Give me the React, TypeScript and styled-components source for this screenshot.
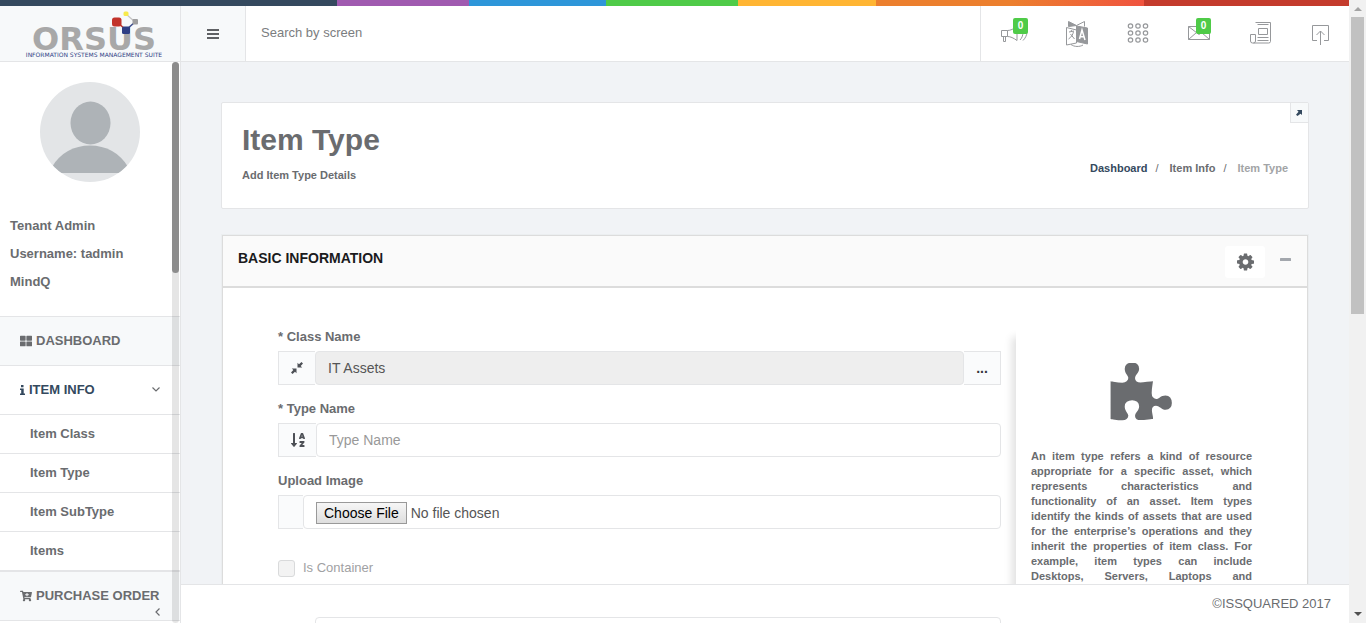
import React from 'react';
import styled, { createGlobalStyle } from 'styled-components';
import { FaThLarge, FaCartPlus, FaSortAlphaDown } from 'react-icons/fa';

const GlobalStyle = createGlobalStyle`
  *, *::before, *::after { box-sizing: border-box; }
  body {
    margin: 0;
    background: #f1f3f6;
    color: #6a6c6f;
    font: 13px/18px "Liberation Sans", Arial, sans-serif;
  }
  button, input { font: inherit; color: inherit; }
  a { color: inherit; text-decoration: none; }
  svg { display: block; flex: none; }
`;

const Shell = styled.div`
  display: flex;
  height: 100vh;
  overflow: hidden;
`;

const Page = styled.div`
  flex: 1;
  min-width: 0;
  display: flex;
  flex-direction: column;
`;

const Rainbow = styled.div`
  flex: none;
  height: 6px;
  background: linear-gradient(to right, #34495e 25%, #a05ab0 25%, #a05ab0 34.8%, #2e96d9 34.8%, #2e96d9 44.9%,
    #4fcb48 44.9%, #4fcb48 54.7%, #ffb533 54.7%, #ffb533 64.9%, #ec7f2e 64.9%, #ec7f2e 75%, #f0533f 84.8%, #c43b2c 84.8%);
`;

const Header = styled.header`
  flex: none;
  display: flex;
  height: 56px;
  background: #fff;
  border-bottom: 1px solid #e4e5e7;
`;

const LogoLink = styled.a`
  flex: none;
  width: 181px;
  background: #f7f9fa;
  border-right: 1px solid #e4e5e7;
`;

const MenuButton = styled.button`
  flex: none;
  width: 65px;
  display: flex;
  align-items: center;
  justify-content: center;
  background: #f7f9fa;
  border: 0;
  border-right: 1px solid #e4e5e7;
`;

const Search = styled.input`
  flex: 1;
  min-width: 0;
  padding: 0 15px 1px;
  border: 0;
  background: #fff;
  &::placeholder { color: #7b7d80; opacity: 1; }
`;

const Tools = styled.nav`
  flex: none;
  display: flex;
  padding-left: 2px;
  border-left: 1px solid #e4e5e7;
`;

const ToolButton = styled.button`
  position: relative;
  width: 61px;
  display: flex;
  align-items: center;
  justify-content: center;
  padding: 0 0 2px 4px;
  border: 0;
  background: none;
  color: #96989b;
`;

const Badge = styled.span`
  position: absolute;
  top: 12px;
  left: 30px;
  width: 15px;
  border-radius: 2px;
  background: #4fcb48;
  color: #fff;
  font-size: 10px;
  font-weight: bold;
  line-height: 16px;
  text-align: center;
`;

const Columns = styled.div`
  flex: 1;
  min-height: 0;
  display: flex;
`;

const Sidebar = styled.aside`
  position: relative;
  flex: none;
  width: 181px;
  overflow: hidden;
  background: #fff;
  border-right: 1px solid #e4e5e7;
  font-weight: bold;
`;

const SideTrack = styled.div`
  position: absolute;
  top: 0;
  right: 1px;
  bottom: 0;
  width: 7px;
  border-radius: 4px;
  background: rgba(0, 0, 0, 0.1);
`;

const SideThumb = styled.div`
  height: 211px;
  border-radius: 4px;
  background: #8c8c8c;
`;

const Profile = styled.div`
  padding: 20px 10px;
  border-bottom: 1px solid #e4e5e7;
`;

const Avatar = styled.div`
  width: 100px;
  height: 100px;
  margin: 0 auto 30px 30px;
  border-radius: 50%;
  overflow: hidden;
`;

const ProfileLine = styled.p`
  margin: 0;
  line-height: 28px;
`;

const Menu = styled.ul`
  margin: 0;
  padding: 0;
  list-style: none;
`;

const MenuLink = styled.a<{ $open?: boolean }>`
  display: flex;
  flex-wrap: wrap;
  align-items: center;
  align-content: flex-start;
  column-gap: 4px;
  height: 49px;
  padding: 15px 20px 0;
  background: ${(p) => (p.$open ? '#fff' : '#f7f9fa')};
  color: ${(p) => (p.$open ? '#34495e' : '#6a6c6f')};
  border-bottom: 1px solid #e4e5e7;
`;

const Chevron = styled.svg`
  margin-left: auto;
  fill: none;
  stroke: #6a6c6f;
  stroke-width: 1.2;
`;

const SubLink = styled.a`
  display: block;
  padding: 10px 30px;
  border-bottom: 1px solid #e4e5e7;
`;

const SubMenu = styled(Menu)`
  border-bottom: 1px solid #e4e5e7;
`;

const Main = styled.main`
  position: relative;
  flex: 1;
  min-width: 0;
  overflow: hidden;
  padding: 40px 40px 0;
`;

const TitleCard = styled.section`
  position: relative;
  display: flex;
  justify-content: space-between;
  margin-bottom: 26px;
  padding: 20px 20px 25px;
  background: #fff;
  border: 1px solid #e4e5e7;
  border-radius: 2px;
  font-size: 11px;
  font-weight: bold;
  line-height: 16px;
`;

const Title = styled.h1`
  margin: 0 0 10px;
  font-size: 30px;
  line-height: 34px;
`;

const Subtitle = styled.p`
  margin: 0;
`;

const Crumbs = styled.ol`
  display: flex;
  margin: 0;
  padding: 37px 0 0;
  list-style: none;
  li { color: #a2a4a6; }
  li:first-child { color: #34495e; }
  li:nth-child(2) { color: #6a6c6f; }
  li + li::before {
    content: "/";
    padding: 0 11px 0 8px;
    color: #6a6c6f;
    font-weight: normal;
  }
`;

const CornerButton = styled.button`
  position: absolute;
  top: 0;
  right: 0;
  display: flex;
  align-items: center;
  justify-content: center;
  width: 18px;
  height: 20px;
  padding: 0 1px 0 0;
  background: #f7f9fa;
  border: solid #e4e5e7;
  border-width: 0 0 1px 1px;
`;

const Panel = styled.section`
  margin: 0 1px;
  background: #fff;
  border: 1px solid #dcdcdc;
  box-shadow: 0 0 0 1px #ebeef0;
`;

const PanelHead = styled.div`
  display: flex;
  align-items: flex-start;
  gap: 15px;
  padding: 10px 16px 8px 15px;
  background: #fafafa;
  border-bottom: 2px solid #dcdcdc;
`;

const PanelTitle = styled.h2`
  flex: 1;
  margin: 0;
  padding-top: 2px;
  color: #1b1b1d;
  font-size: 14px;
  line-height: 20px;
`;

const GearButton = styled.button`
  display: flex;
  align-items: center;
  justify-content: center;
  width: 40px;
  height: 32px;
  padding: 0;
  border: 0;
  border-radius: 3px;
  background: #fff;
`;

const CollapseButton = styled.button`
  width: 11px;
  height: 27px;
  padding: 0;
  border: 0;
  background: none;
`;

const PanelBody = styled.div`
  display: flex;
  gap: 15px;
  padding: 40px 40px 40px 55px;
`;

const Form = styled.form`
  flex: 1;
  min-width: 0;
`;

const Label = styled.label`
  display: block;
  margin-bottom: 5px;
  font-weight: bold;
`;

const Group = styled.div`
  display: flex;
  height: 34px;
  margin-bottom: 15px;
`;

const addonWidths = { narrow: 25, normal: 37, wide: 38 };

const Addon = styled.span<{ $size?: keyof typeof addonWidths }>`
  flex: none;
  display: flex;
  align-items: center;
  justify-content: center;
  width: ${(p) => addonWidths[p.$size ?? 'normal']}px;
  background: #fafbfc;
  border: 1px solid #e4e5e7;
  border-right: 0;
  color: #4d5056;
`;

const BrowseButton = styled.button`
  flex: none;
  width: 37px;
  padding: 0;
  background: #fafbfc;
  border: 1px solid #e4e5e7;
  border-left: 0;
  color: #34373b;
  font-size: 14px;
  font-weight: bold;
`;

const Field = styled.input`
  position: relative;
  z-index: 2;
  flex: 1;
  min-width: 0;
  padding: 6px 12px;
  border: 1px solid #e4e5e7;
  border-radius: 4px;
  background: #fff;
  color: #555;
  font-size: 14px;
  line-height: 20px;
  &::placeholder { color: #999; opacity: 1; }
  &:read-only:not([type='file']) { background: #eee; }
  &::file-selector-button {
    height: 22px;
    margin: 0 4px 0 0;
    padding: 0 7px;
    border: 1px solid #999;
    border-radius: 0;
    background: linear-gradient(#f6f6f6, #dedede);
    color: #000;
    font: 14px/20px "Liberation Sans", Arial, sans-serif;
  }
`;

const CheckRow = styled.label`
  display: flex;
  align-items: center;
  gap: 8px;
  margin: 30px 0 17px;
  color: #9fa1a3;
`;

const Checkbox = styled.input`
  appearance: none;
  width: 17px;
  height: 17px;
  margin: 0;
  border: 1px solid #d9dadb;
  border-radius: 3px;
  background: #f3f3f3;
`;

const Help = styled.aside`
  flex: none;
  width: 251px;
  padding: 35px 15px 15px;
  background: #fff;
  box-shadow: -4px 9px 8px rgba(0, 0, 0, 0.12);
  clip-path: inset(0 0 0 -15px);
  font-size: 11px;
  font-weight: bold;
  line-height: 15px;
  text-align: justify;
  svg { margin: 0 auto 20px; }
`;

const HelpText = styled.p`
  margin: 0;
`;

const Footer = styled.footer`
  position: absolute;
  left: 0;
  right: 0;
  bottom: 0;
  z-index: 1;
  padding: 10px 18px;
  background: #fff;
  border-top: 1px solid #e4e5e7;
  text-align: right;
`;

const ScrollBar = styled.div`
  flex: none;
  display: flex;
  flex-direction: column;
  align-items: center;
  justify-content: space-between;
  width: 17px;
  padding: 7px 0;
  background: #f1f1f1;
`;

const ScrollTop = styled.div`
  display: flex;
  flex-direction: column;
  align-items: center;
  gap: 6px;
`;

const ScrollThumb = styled.div`
  width: 13px;
  height: 297px;
  background: #c1c1c1;
`;

const Logo = () => (
  <svg width="180" height="55" viewBox="0 6 180 55" role="img" aria-label="ORSUS Information Systems Management Suite">
    <text x="94" y="50" textAnchor="middle" fontFamily="DejaVu Sans" fontWeight="bold" fontSize="32" fill="#a8a8a8">ORSUS</text>
    <text x="94" y="57" textAnchor="middle" fontFamily="DejaVu Sans" fontSize="6" fill="#2f3f85">INFORMATION SYSTEMS MANAGEMENT SUITE</text>
    <path d="M117 22l9 8" stroke="#b9342a" strokeWidth="1.5" />
    <path d="M126 30l9-8" stroke="#3a4a8a" strokeWidth="1.5" />
    <path d="M126 14l9 8" stroke="#c4c4c4" strokeWidth="1.2" />
    <rect x="112" y="17.5" width="9.5" height="9" rx="2.5" fill="#c2332a" />
    <rect x="122" y="26.5" width="8" height="7.5" rx="1.5" fill="#2f3f85" />
    <rect x="132.5" y="19" width="5.5" height="5.5" rx="1" fill="#9f9f9f" />
    <rect x="123.5" y="11.5" width="5" height="4.5" rx="1.5" fill="#f7ea4b" />
  </svg>
);

const Bars = () => (
  <svg width="12" height="10" viewBox="0 0 12 10" fill="#5f6164">
    <path d="M0 0h12v2H0zM0 4h12v2H0zM0 8h12v2H0z" />
  </svg>
);

const InfoMark = () => (
  <svg width="5" height="10" viewBox="0 0 5 10" fill="currentColor">
    <path d="M1 0h2.500v2.200H1zM0 3.500h3.700V8.500H5V10H0V8.500h1.200V5H0z" />
  </svg>
);

const ToolSvg = ({ children }: { children: React.ReactNode }) => (
  <svg width="28" height="28" viewBox="0 0 28 28" fill="none" stroke="currentColor" strokeWidth="1" overflow="visible">
    {children}
  </svg>
);

const Speaker = () => (
  <ToolSvg>
    <path d="M-.5 11.500h6v6h-6zM5.500 11.500c3 0 6-1.500 9.500-4v14c-3.500-2.500-6.500-4-9.500-4M1.500 17.500v5h2v-5" />
    <path d="M18 21c1.500-1.500 3-4 3-8M21 21.500c2-2 4-5 4-9" />
  </ToolSvg>
);

const Translate = () => (
  <ToolSvg>
    <path d="M3.500 8.500l10 2.500v13l-10 2z" />
    <path d="M5.500 2.500l8 4-8 1z" fill="currentColor" />
    <path d="M13.500 6.500l8-4v5" />
    <path d="M13.500 7l11 2v16l-11-2.500z" fill="currentColor" />
    <path d="M6 13l5-1M8 11l1 1.500M10.500 12.500c-.5 3-2 5.500-5 7.500M7.500 15l4 5" />
    <path d="M8 25.500c3 2.500 9 2.500 12 .5" />
    <path d="M16.500 20l2.500-9 3 10M17.500 17.500l4 .5" stroke="#fff" strokeWidth="1.5" />
  </ToolSvg>
);

const Keypad = () => (
  <ToolSvg>
    {[7, 14, 21].map((y) =>
      [6.5, 14, 21.5].map((x) => <circle key={`${x}-${y}`} cx={x} cy={y} r="2.2" strokeWidth="1.2" />),
    )}
  </ToolSvg>
);

const Mail = () => (
  <ToolSvg>
    <path d="M3.500 7.500h21v13h-21zM3.500 7.500l10.500 8 10.500-8M3.500 20.500l8-7M24.500 20.500l-8-7" />
  </ToolSvg>
);

const News = () => (
  <ToolSvg>
    <path d="M9.500 3.500h15v19q0 1.500-2 1.500H6.500q-2 0-2-2v-6.500h5V22q0 2-2 2M11.500 5.500h11" />
    <path d="M12.500 9.500h9v6h-9zM11.500 18.500h11M11.500 21.500h11" />
  </ToolSvg>
);

const Upload = () => (
  <ToolSvg>
    <path d="M10 21.500H5.500v-15h16v15H17M13.500 26V12M9.500 16l4-4 4 4" />
  </ToolSvg>
);

const Person = () => (
  <svg width="100" height="100" viewBox="0 0 100 100">
    <rect width="100" height="100" fill="#e3e5e7" />
    <ellipse cx="50.5" cy="41" rx="20" ry="21.5" fill="#aeb3b7" />
    <path d="M12 91V85C20 71 34 63.500 50 63.500S80 71 88 85v6z" fill="#aeb3b7" />
  </svg>
);

const Gear = () => (
  <svg width="17" height="20" viewBox="0 0 1536 1792" fill="#6a6c6f">
    <path d="M1024 896q0-106-75-181t-181-75-181 75-75 181 75 181 181 75 181-75 75-181zm512-109v222q0 12-8 23t-20 13l-185 28q-19 54-39 91 35 50 107 138 10 12 10 25t-9 23q-27 37-99 108t-94 71q-12 0-26-9l-138-108q-44 23-91 38-16 136-29 186-7 28-36 28h-222q-14 0-24.500-8.500t-11.500-21.500l-28-184q-49-16-90-37l-141 107q-10 9-25 9-14 0-25-11-126-114-165-168-7-10-7-23 0-12 8-23 15-21 51-66.500t54-70.500q-27-50-41-99l-183-27q-13-2-21-12.500t-8-23.500v-222q0-12 8-23t19-13l186-28q14-46 39-92-40-57-107-138-10-12-10-24 0-10 9-23 26-36 98.500-107.500t94.500-71.500q13 0 26 10l138 107q44-23 91-38 16-136 29-186 7-28 36-28h222q14 0 24.500 8.500t11.500 21.500l28 184q49 16 90 37l142-107q9-9 24-9 13 0 25 10 129 119 165 170 7 8 7 22 0 12-8 23-15 21-51 66.500t-54 70.500q26 50 41 98l183 28q13 2 21 12.500t8 23.500z" />
  </svg>
);

const Puzzle = () => (
  <svg width="66" height="66" viewBox="48 0 1792 1792" fill="#6a6c6f">
    <path d="M1755 1083q0 81-44.500 135t-123.500 54q-41 0-77.500-17.500t-59-38-56.500-38-71-17.500q-110 0-110 124 0 39 16 115t15 115v5q-22 0-33 1-34 3-97.500 11.500t-115.500 13.500-98 5q-61 0-103-26.500t-42-83.500q0-37 17.500-71t38-56.500 38-59 17.500-77.500q0-79-54-123.500t-135-44.500q-84 0-143 45.500t-59 127.500q0 43 15 83t33.500 64.500 33.500 53 15 50.500q0 45-46 89-37 35-117 35-95 0-245-24-9-2-27.500-4t-27.500-4l-13-2q-1 0-3-1-2 0-2-1v-1024q2 1 17.500 3.500t34 5 21.500 3.500q150 24 245 24 80 0 117-35 46-44 46-89 0-22-15-50.500t-33.500-53-33.500-64.500-15-83q0-82 59-127.500t144-45.500q80 0 134 44.500t54 123.500q0 41-17.500 77.500t-38 59-38 56.500-17.500 71q0 57 42 83.500t103 26.500q64 0 180-15t163-17v2q-1 2-3.500 17.500t-5 34-3.500 21.500q-24 150-24 245 0 80 35 117 44 46 89 46 22 0 50.500-15t53-33.500 64.500-33.500 83-15q82 0 127.500 59t45.500 143z" />
  </svg>
);

const ResizeSmall = () => (
  <svg width="12" height="12" viewBox="0 0 12 12" fill="currentColor">
    <path d="M6.500 .8v4.700h4.700L9.700 4 12 1.500 10.500 0 8 2.300zM5.500 11.200V6.500H.8L2.300 8 0 10.500 1.500 12 4 9.700z" />
  </svg>
);

const tools = [
  { name: 'Announcements', icon: <Speaker />, count: 0 },
  { name: 'Language', icon: <Translate /> },
  { name: 'Applications', icon: <Keypad /> },
  { name: 'Messages', icon: <Mail />, count: 0 },
  { name: 'News', icon: <News /> },
  { name: 'Log out', icon: <Upload /> },
];

export default function App() {
  return (
    <Shell>
      <GlobalStyle />
      <Page>
        <Rainbow />
        <Header>
          <LogoLink href="#"><Logo /></LogoLink>
          <MenuButton type="button" aria-label="Toggle menu"><Bars /></MenuButton>
          <Search type="text" placeholder="Search by screen" aria-label="Search by screen" />
          <Tools>
            {tools.map((t) => (
              <ToolButton key={t.name} type="button" aria-label={t.name}>
                {t.icon}
                {t.count !== undefined && <Badge>{t.count}</Badge>}
              </ToolButton>
            ))}
          </Tools>
        </Header>
        <Columns>
          <Sidebar>
            <Profile>
              <Avatar><Person /></Avatar>
              <ProfileLine>Tenant Admin</ProfileLine>
              <ProfileLine>Username: tadmin</ProfileLine>
              <ProfileLine>MindQ</ProfileLine>
            </Profile>
            <Menu>
              <li><MenuLink href="#"><FaThLarge size={12} />DASHBOARD</MenuLink></li>
              <li>
                <MenuLink href="#" $open>
                  <InfoMark />
                  ITEM INFO
                  <Chevron width="8" height="8" viewBox="0 0 8 8"><path d="M.5 1.500L4 5l3.500-3.500" /></Chevron>
                </MenuLink>
                <SubMenu>
                  {['Item Class', 'Item Type', 'Item SubType', 'Items'].map((s) => (
                    <li key={s}><SubLink href="#">{s}</SubLink></li>
                  ))}
                </SubMenu>
              </li>
              <li>
                <MenuLink href="#">
                  <FaCartPlus size={12} />
                  PURCHASE ORDER
                  <Chevron width="5" height="14" viewBox="0 0 5 14"><path d="M4.500 3.500L1 7l3.500 3.500" /></Chevron>
                </MenuLink>
              </li>
            </Menu>
            <SideTrack><SideThumb /></SideTrack>
          </Sidebar>
          <Main>
            <TitleCard>
              <div>
                <Title>Item Type</Title>
                <Subtitle>Add Item Type Details</Subtitle>
              </div>
              <Crumbs>
                <li><a href="#">Dashboard</a></li>
                <li><a href="#">Item Info</a></li>
                <li>Item Type</li>
              </Crumbs>
              <CornerButton type="button" aria-label="Shrink header">
                <svg width="6" height="6" viewBox="0 0 6 6" fill="#34495e">
                  <path d="M1 0h5v5L4.500 3.700 1.500 6 0 4.800 2.500 1.700z" />
                </svg>
              </CornerButton>
            </TitleCard>
            <Panel>
              <PanelHead>
                <PanelTitle>BASIC INFORMATION</PanelTitle>
                <GearButton type="button" aria-label="Settings"><Gear /></GearButton>
                <CollapseButton type="button" aria-label="Collapse">
                  <svg width="11" height="3" viewBox="0 0 11 3" fill="#a3a7ad"><rect width="11" height="3" rx="0.5" /></svg>
                </CollapseButton>
              </PanelHead>
              <PanelBody>
                <Form>
                  <Label htmlFor="class-name">* Class Name</Label>
                  <Group>
                    <Addon><ResizeSmall /></Addon>
                    <Field id="class-name" type="text" defaultValue="IT Assets" readOnly />
                    <BrowseButton type="button">...</BrowseButton>
                  </Group>
                  <Label htmlFor="type-name">* Type Name</Label>
                  <Group>
                    <Addon $size="wide"><FaSortAlphaDown size={16} /></Addon>
                    <Field id="type-name" type="text" placeholder="Type Name" />
                  </Group>
                  <Label htmlFor="upload">Upload Image</Label>
                  <Group>
                    <Addon $size="narrow" />
                    <Field id="upload" type="file" />
                  </Group>
                  <CheckRow>
                    <Checkbox type="checkbox" disabled />
                    Is Container
                  </CheckRow>
                  <Label htmlFor="description">Description</Label>
                  <Group>
                    <Addon />
                    <Field id="description" type="text" />
                  </Group>
                </Form>
                <Help>
                  <Puzzle />
                  <HelpText>
                    An item type refers a kind of resource appropriate for a specific asset, which represents
                    characteristics and functionality of an asset. Item types identify the kinds of assets that are
                    used for the enterprise’s operations and they inherit the properties of item class. For example,
                    item types can include Desktops, Servers, Laptops and Workstations.
                  </HelpText>
                </Help>
              </PanelBody>
            </Panel>
            <Footer>©ISSQUARED 2017</Footer>
          </Main>
        </Columns>
      </Page>
      <ScrollBar>
        <ScrollTop>
          <svg width="8" height="4" viewBox="0 0 8 4" fill="#a3a3a3"><path d="M4 0l4 4H0z" /></svg>
          <ScrollThumb />
        </ScrollTop>
        <svg width="8" height="4" viewBox="0 0 8 4" fill="#505050"><path d="M0 0h8L4 4z" /></svg>
      </ScrollBar>
    </Shell>
  );
}
